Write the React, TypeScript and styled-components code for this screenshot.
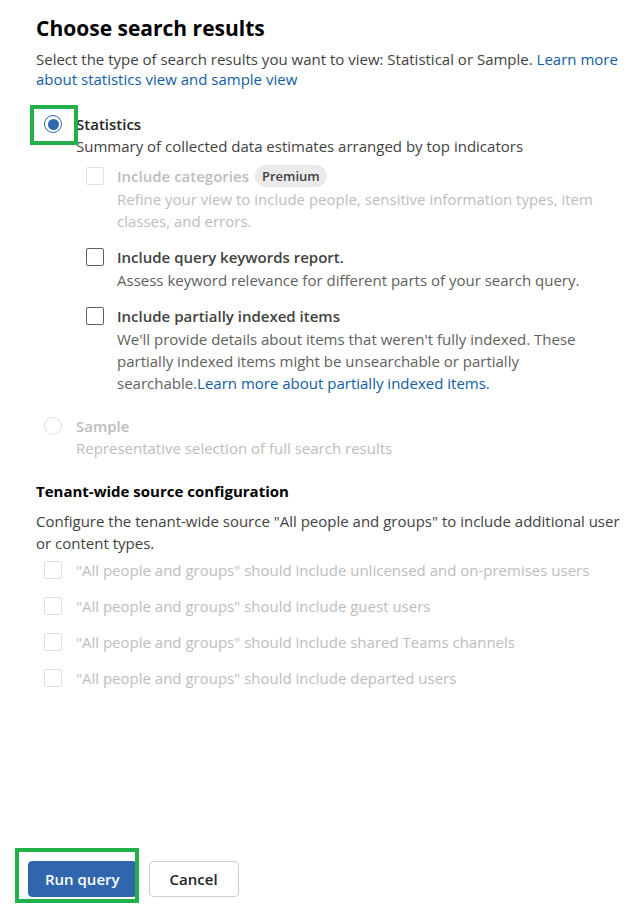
import React from "react";
import styled, { createGlobalStyle } from "styled-components";

const GlobalStyle = createGlobalStyle`
  body {
    margin: 0;
    background: #ffffff;
    font-family: "Open Sans", "Noto Sans", sans-serif;
    color: #242424;
  }
`;

const Page = styled.div`
  width: 633px;
  height: 905px;
  box-sizing: border-box;
  padding: 12px 8px 0 36px;
  display: flex;
  flex-direction: column;
`;

const Title = styled.h1`
  margin: 0;
  font-size: 21px;
  font-weight: 700;
  line-height: 32px;
  color: #000;
`;

const Text = styled.p<{ $muted?: boolean }>`
  margin: 0;
  font-size: 15px;
  line-height: 22px;
  color: ${(p) => (p.$muted ? "#bdbdbd" : "#424242")};
`;

const Intro = styled(Text)`
  margin-top: 5px;
  line-height: 20px;
`;

const Link = styled.a`
  color: #115ea3;
  text-decoration: none;
`;

const RadioRow = styled.div<{ $gapTop: number }>`
  position: relative;
  display: flex;
  gap: 14px;
  margin-left: 8px;
  margin-top: ${(p) => p.$gapTop}px;
`;

const RadioCircle = styled.span<{ $checked?: boolean }>`
  flex: none;
  box-sizing: border-box;
  width: 18px;
  height: 18px;
  margin-top: 2px;
  border-radius: 50%;
  border: 1px solid ${(p) => (p.$checked ? "#2f68b0" : "#e0e0e0")};
  display: flex;
  align-items: center;
  justify-content: center;
  &::after {
    content: "";
    display: ${(p) => (p.$checked ? "block" : "none")};
    width: 11px;
    height: 11px;
    border-radius: 50%;
    background: #2f68b0;
  }
`;

const OptionLabel = styled.div<{ $disabled?: boolean }>`
  font-size: 15px;
  font-weight: 600;
  line-height: 22px;
  color: ${(p) => (p.$disabled ? "#bdbdbd" : "#242424")};
`;

const OptionBody = styled.div`
  display: flex;
  flex-direction: column;
`;

const Highlight = styled.span<{ $top: number; $left: number; $w: number; $h: number }>`
  position: absolute;
  top: ${(p) => p.$top}px;
  left: ${(p) => p.$left}px;
  width: ${(p) => p.$w}px;
  height: ${(p) => p.$h}px;
  box-sizing: border-box;
  border: 4px solid #22b04b;
  pointer-events: none;
`;

const SubOptions = styled.div`
  display: flex;
  flex-direction: column;
  gap: 14px;
  margin-top: 8px;
  margin-left: 10px;
`;

const CheckRow = styled.div<{ $gap?: number }>`
  display: flex;
  gap: ${(p) => p.$gap ?? 13}px;
`;

const Box = styled.span<{ $disabled?: boolean }>`
  flex: none;
  box-sizing: border-box;
  width: 18px;
  height: 18px;
  margin-top: 2px;
  border-radius: 2px;
  border: 1px solid ${(p) => (p.$disabled ? "#e0e0e0" : "#616161")};
  background: #fff;
`;

const Badge = styled.span`
  display: inline-block;
  margin-left: 6px;
  padding: 0 7px;
  border-radius: 11px;
  background: #ebebeb;
  color: #424242;
  font-size: 13px;
  font-weight: 600;
  line-height: 22px;
  vertical-align: top;
`;

const SubLabel = styled(OptionLabel)`
  color: ${(p) => (p.$disabled ? "#bdbdbd" : "#424242")};
`;

const SubDesc = styled(Text)`
  color: ${(p) => (p.$muted ? "#bdbdbd" : "#616161")};
  margin-top: 1px;
`;

const SectionTitle = styled.h2`
  margin: 21px 0 0;
  font-size: 15px;
  font-weight: 700;
  line-height: 22px;
  color: #000;
`;

const TenantDesc = styled(Text)`
  margin-top: 8px;
`;

const TenantList = styled.div`
  display: flex;
  flex-direction: column;
  gap: 14px;
  margin-top: 5px;
  margin-left: 8px;
`;

const Footer = styled.div`
  position: relative;
  margin-top: auto;
  margin-left: -8px;
  margin-bottom: 8px;
  display: flex;
  gap: 12px;
`;

const Button = styled.button<{ $primary?: boolean }>`
  height: 36px;
  padding: 0 ${(p) => (p.$primary ? 16 : 20)}px;
  border-radius: 4px;
  font-family: "Open Sans", "Noto Sans", sans-serif;
  font-size: 15px;
  font-weight: 600;
  cursor: pointer;
  border: 1px solid ${(p) => (p.$primary ? "#2f66ad" : "#d1d1d1")};
  background: ${(p) => (p.$primary ? "#2f66ad" : "#fff")};
  color: ${(p) => (p.$primary ? "#fff" : "#242424")};
`;

const tenantOptions = [
  '"All people and groups" should include unlicensed and on-premises users',
  '"All people and groups" should include guest users',
  '"All people and groups" should include shared Teams channels',
  '"All people and groups" should include departed users',
];

export default function App() {
  return (
    <>
      <GlobalStyle />
      <Page>
        <Title>Choose search results</Title>
        <Intro>
          Select the type of search results you want to view: Statistical or Sample.{" "}
          <Link href="#">Learn more about statistics view and sample view</Link>
        </Intro>

        <RadioRow $gapTop={24}>
          <Highlight $top={-8} $left={-14} $w={48} $h={40} />
          <RadioCircle $checked />
          <OptionBody>
            <OptionLabel>Statistics</OptionLabel>
            <Text>Summary of collected data estimates arranged by top indicators</Text>
            <SubOptions>
              <CheckRow>
                <Box $disabled />
                <OptionBody>
                  <SubLabel $disabled>
                    Include categories<Badge>Premium</Badge>
                  </SubLabel>
                  <SubDesc $muted>
                    Refine your view to include people, sensitive information types, item
                    classes, and errors.
                  </SubDesc>
                </OptionBody>
              </CheckRow>
              <CheckRow>
                <Box />
                <OptionBody>
                  <SubLabel>Include query keywords report.</SubLabel>
                  <SubDesc>Assess keyword relevance for different parts of your search query.</SubDesc>
                </OptionBody>
              </CheckRow>
              <CheckRow>
                <Box />
                <OptionBody>
                  <SubLabel>Include partially indexed items</SubLabel>
                  <SubDesc>
                    We'll provide details about items that weren't fully indexed. These
                    partially indexed items might be unsearchable or partially
                    searchable.<Link href="#">Learn more about partially indexed items.</Link>
                  </SubDesc>
                </OptionBody>
              </CheckRow>
            </SubOptions>
          </OptionBody>
        </RadioRow>

        <RadioRow $gapTop={21}>
          <RadioCircle />
          <OptionBody>
            <OptionLabel $disabled>Sample</OptionLabel>
            <Text $muted>Representative selection of full search results</Text>
          </OptionBody>
        </RadioRow>

        <SectionTitle>Tenant-wide source configuration</SectionTitle>
        <TenantDesc>
          Configure the tenant-wide source "All people and groups" to include additional user
          or content types.
        </TenantDesc>
        <TenantList>
          {tenantOptions.map((t) => (
            <CheckRow key={t} $gap={14}>
              <Box $disabled />
              <Text $muted>{t}</Text>
            </CheckRow>
          ))}
        </TenantList>

        <Footer>
          <Highlight $top={-13} $left={-13} $w={124} $h={55} />
          <Button $primary>Run query</Button>
          <Button>Cancel</Button>
        </Footer>
      </Page>
    </>
  );
}
